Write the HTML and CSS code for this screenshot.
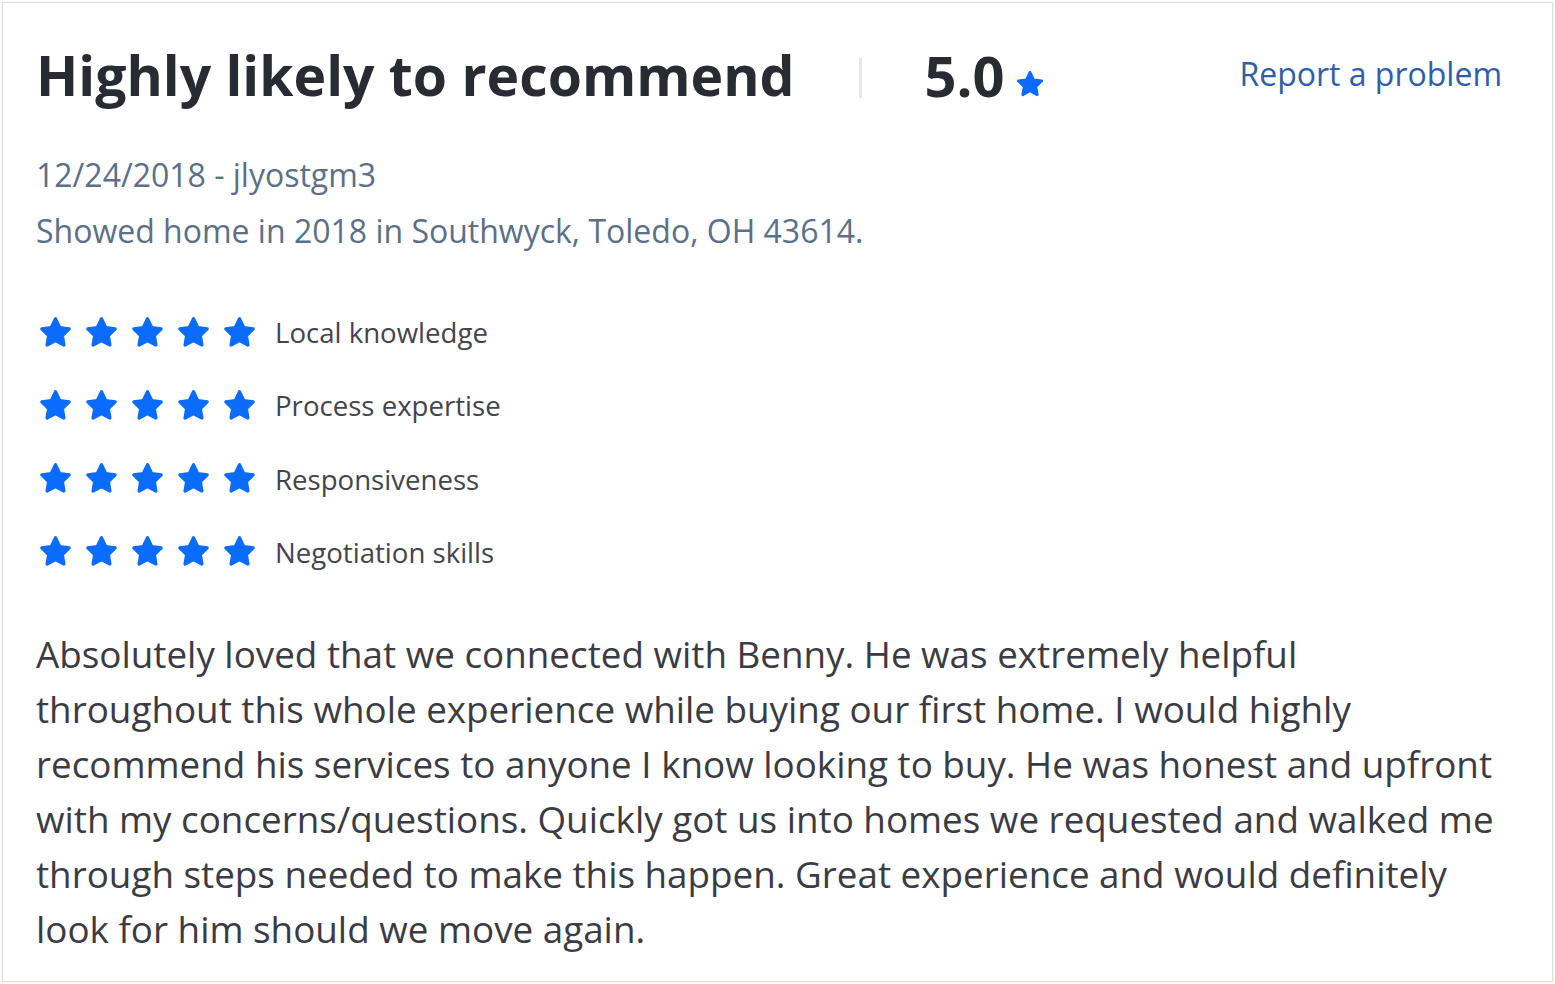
FILE: index.html
```html
<!DOCTYPE html>
<html>

<head>
    <title>Review</title>
    <link rel="stylesheet" href="styles.css">
</head>

<body>
    <svg class="defs" width="0" height="0">
        <symbol id="star" viewBox="0 0 24 24">
            <polygon points="12,2.6 14.9,8.6 21.4,9.5 16.7,14.1 17.8,20.6 12,17.5 6.2,20.6 7.3,14.1 2.6,9.5 9.1,8.6"
                fill="currentColor" stroke="currentColor" stroke-width="2.2" stroke-linejoin="round" />
        </symbol>
    </svg>

    <div class="review">
        <div class="review-head">
            <h1 class="title">Highly likely to recommend</h1>
            <span class="divider"></span>
            <div class="score">5.0 <svg class="score-star"><use href="#star"></use></svg></div>
            <a class="report" href="#">Report a problem</a>
        </div>

        <div class="meta">
            <div>12/24/2018 - jlyostgm3</div>
            <div>Showed home in 2018 in Southwyck, Toledo, OH 43614.</div>
        </div>

        <div class="ratings">
            <div class="rating">
                <div class="stars">
                    <svg><use href="#star"></use></svg>
                    <svg><use href="#star"></use></svg>
                    <svg><use href="#star"></use></svg>
                    <svg><use href="#star"></use></svg>
                    <svg><use href="#star"></use></svg>
                </div>
                <span class="label">Local knowledge</span>
            </div>
            <div class="rating">
                <div class="stars">
                    <svg><use href="#star"></use></svg>
                    <svg><use href="#star"></use></svg>
                    <svg><use href="#star"></use></svg>
                    <svg><use href="#star"></use></svg>
                    <svg><use href="#star"></use></svg>
                </div>
                <span class="label">Process expertise</span>
            </div>
            <div class="rating">
                <div class="stars">
                    <svg><use href="#star"></use></svg>
                    <svg><use href="#star"></use></svg>
                    <svg><use href="#star"></use></svg>
                    <svg><use href="#star"></use></svg>
                    <svg><use href="#star"></use></svg>
                </div>
                <span class="label">Responsiveness</span>
            </div>
            <div class="rating">
                <div class="stars">
                    <svg><use href="#star"></use></svg>
                    <svg><use href="#star"></use></svg>
                    <svg><use href="#star"></use></svg>
                    <svg><use href="#star"></use></svg>
                    <svg><use href="#star"></use></svg>
                </div>
                <span class="label">Negotiation skills</span>
            </div>
        </div>

        <p class="body">Absolutely loved that we connected with Benny. He was extremely helpful throughout this whole
            experience while buying our first home. I would highly recommend his services to anyone I know looking to
            buy. He was honest and upfront with my concerns/questions. Quickly got us into homes we requested and
            walked me through steps needed to make this happen. Great experience and would definitely look for him
            should we move again.</p>
    </div>
</body>

</html>
```

FILE: styles.css
```css
body {
    margin: 0;
    padding: 2px;
    background: #ffffff;
    font-family: "Open Sans", "Liberation Sans", sans-serif;
}

.defs {
    position: absolute;
}

.review {
    box-sizing: border-box;
    height: 980px;
    border: 1px solid #dedede;
    box-shadow: 0 0 2px rgba(0, 0, 0, 0.08);
    padding: 37px 50px 0 33px;
}

.review-head {
    display: flex;
    align-items: center;
    height: 70px;
}

.title {
    margin: 0;
    font-size: 55.3px;
    line-height: 70px;
    font-weight: 700;
    color: #2a2a33;
}

.divider {
    width: 3px;
    height: 40px;
    margin: 6px 63px 0 64px;
    background: #e6e6e6;
}

.score {
    display: flex;
    align-items: center;
    font-size: 56px;
    line-height: 70px;
    font-weight: 700;
    color: #2a2a33;
}

.score-star {
    width: 30px;
    height: 30px;
    margin: 18px 0 0 10px;
    color: #0a6bff;
}

.report {
    margin-left: auto;
    margin-top: -4px;
    font-size: 32px;
    color: #2f5ea9;
    text-decoration: none;
}

.meta {
    margin-top: 37px;
    font-size: 32px;
    line-height: 56px;
    color: #5b6f87;
}

.ratings {
    display: flex;
    flex-direction: column;
    gap: 33.3px;
    margin-top: 53px;
}

.rating {
    display: flex;
    align-items: center;
    height: 40px;
}

.stars {
    display: flex;
    gap: 11px;
    margin-left: 2px;
    color: #0a6bff;
}

.stars svg {
    width: 35px;
    height: 35px;
}

.label {
    margin-left: 18px;
    font-size: 27.6px;
    color: #44444c;
}

.body {
    max-width: 1462px;
    margin: 55px 0 0;
    font-size: 36.8px;
    line-height: 55px;
    color: #3b3b44;
}
```
